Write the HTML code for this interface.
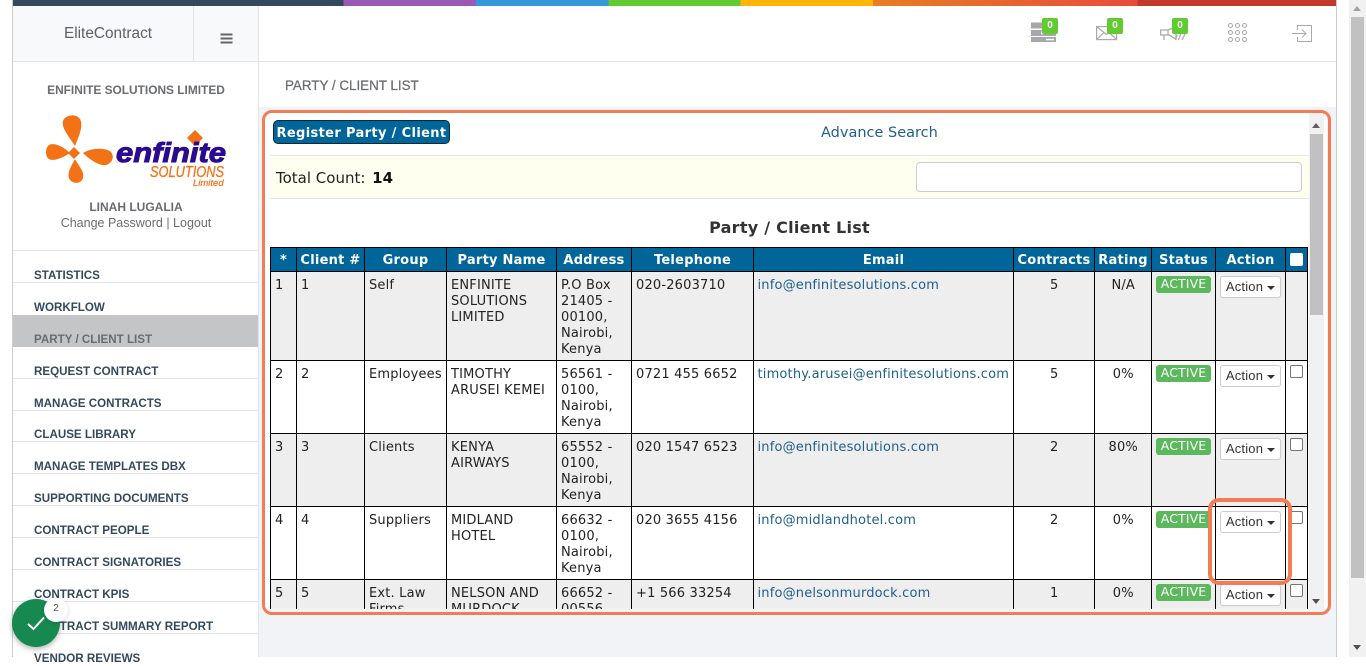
<!DOCTYPE html>
<html><head><meta charset="utf-8"><title>EliteContract</title>
<style>
html,body{margin:0;padding:0;width:1366px;height:657px;overflow:hidden;background:#fff}
*{box-sizing:border-box}
.a{position:absolute}
body{font-family:"Liberation Sans",sans-serif;color:#6a6c6f}
#bar{left:13px;top:0;width:1323px;height:6px;background:linear-gradient(to right,#34495e,#34495e 25%,#9b59b6 25%,#9b59b6 35%,#3498db 35%,#3498db 45%,#62cb31 45%,#62cb31 55%,#ffb606 55%,#ffb606 65%,#e67e22 65%,#e74c3c 85%,#c0392b 85%,#c0392b 100%)}
.m{position:absolute;left:34px;margin-top:1px;font:bold 11.6px/14px "Liberation Sans",sans-serif;color:#34495e;white-space:nowrap}
.s{position:absolute;left:13px;width:245px;height:1px;background:#e4e5e7}
.bd{position:absolute;width:16px;height:16px;background:#62cb31;border-radius:2px;color:#fff;font:bold 10px/16px "Liberation Sans",sans-serif;text-align:center}
table{border-collapse:collapse;table-layout:fixed;width:1037px;font:13px/16px "DejaVu Sans",sans-serif;color:#222;letter-spacing:.18px}
th{background:#006699;color:#fff;font-weight:bold;border:1px solid #000;height:24px;padding:2px 0 0;text-align:center;font-size:13px;white-space:nowrap;letter-spacing:.25px}
td{border:1px solid #000;padding:6px 3.5px 2px 4px;vertical-align:top}
tr.o td{background:#eee}
td.c{text-align:center}
td a{color:#1f5f8b;white-space:nowrap;margin-left:-.5px}
.ac{display:block;width:55px;height:17px;margin:-2px 0 0 0;background:#5cb85c;color:#fff;font:12.5px/16px "DejaVu Sans",sans-serif;border-radius:3px;text-align:center;letter-spacing:.1px}
.bt{display:block;width:61px;height:22px;margin:-2px 0 0 0;background:#fff;border:1px solid #ccc;border-radius:3px;font:13px/20px "Liberation Sans",sans-serif;color:#333;text-align:center;letter-spacing:.2px}
.bt i{display:inline-block;width:0;height:0;border:4px solid transparent;border-top-color:#333;border-bottom:0;margin-left:4px;vertical-align:1px}
.cb{display:block;width:13px;height:13px;border:1px solid #767676;border-radius:2px;background:#fff;margin:-2px 0 0 0}
</style></head><body>
<div class="a" style="left:0;top:0;width:13px;height:657px;background:#fff;border-right:1px solid #ccc"></div>
<div class="a" id="bar"></div>

<!-- header -->
<div class="a" style="left:13px;top:6px;width:181px;height:56px;background:#f7f9fa;border-right:1px solid #e4e5e7;border-bottom:1px solid #e4e5e7"></div>
<div class="a" style="left:13px;top:6px;width:190px;height:56px;font:15.4px/56px 'Liberation Sans',sans-serif;color:#5d6268;text-align:center">EliteContract</div>
<div class="a" style="left:194px;top:6px;width:65px;height:56px;background:#f7f9fa;border-right:1px solid #e4e5e7;border-bottom:1px solid #e4e5e7"></div>
<svg class="a" style="left:220px;top:33px" width="14" height="12"><path d="M.5 1.5H12.5M.5 5.500H12.500M.5 9.500H12.500" stroke="#666" stroke-width="2"/></svg>
<div class="a" style="left:259px;top:61px;width:1077px;height:1px;background:#e4e5e7"></div>

<!-- top icons -->
<svg class="a" style="left:1028px;top:20px" width="30" height="24"><g fill="#a5a7aa"><rect x="3" y="2.500" width="25" height="6"/><rect x="3" y="10" width="25" height="6"/><rect x="3" y="17" width="25" height="5"/></g><rect x="13" y="11.500" width="2" height="3" fill="#fff"/><rect x="18" y="18.800" width="8" height="1.500" fill="#fff"/></svg>
<div class="bd" style="left:1042px;top:18px">0</div>
<svg class="a" style="left:1096px;top:24px" width="24" height="18" fill="none" stroke="#aaa" stroke-width="1.200"><rect x=".6" y="2.600" width="20" height="13"/><path d="M.6 2.600L10.500 10.500 20.600 2.600M.6 15.600L8 8.500M20.600 15.600L13 8.500"/></svg>
<div class="bd" style="left:1107px;top:18px">0</div>
<svg class="a" style="left:1160px;top:24px" width="28" height="18" fill="none" stroke="#aaa" stroke-width="1.300"><path d="M.7 6H8V11H.7ZM4 11V16M8 6L16 3V15L8 10.500M17 11L15.500 16M21 9L18.500 16M25 10L22 16"/></svg>
<div class="bd" style="left:1172px;top:18px">0</div>
<svg class="a" style="left:1227px;top:22px" width="22" height="22" fill="none" stroke="#aaa" stroke-width="1.100"><g><circle cx="3.500" cy="3.500" r="2"/><circle cx="10.500" cy="3.500" r="2"/><circle cx="17.500" cy="3.500" r="2"/><circle cx="3.500" cy="10.500" r="2"/><circle cx="10.500" cy="10.500" r="2"/><circle cx="17.500" cy="10.500" r="2"/><circle cx="3.500" cy="17.500" r="2"/><circle cx="10.500" cy="17.500" r="2"/><circle cx="17.500" cy="17.500" r="2"/></g></svg>
<svg class="a" style="left:1291px;top:24px" width="22" height="19" fill="none" stroke="#aaa" stroke-width="1"><path d="M6.500 6V1.500H20.500V17.500H6.500V13M1 9.500H15M11 5.500L15 9.500 11 13.500"/></svg>

<!-- sidebar -->
<div class="a" style="left:13px;top:62px;width:246px;height:595px;background:#fff;border-right:1px solid #e4e5e7"></div>
<div class="a" style="left:13px;top:83px;width:246px;text-align:center;font:bold 11.9px/15px 'Liberation Sans',sans-serif;color:#6a6c6f">ENFINITE SOLUTIONS LIMITED</div>
<svg class="a" style="left:40px;top:110px" width="195" height="80" viewBox="0 0 195 80">
<g fill="#f47216">
<path d="M35 36C30 28 21 18 23 11C25 5 36 3 40 9C44 16 38 28 35 36Z"/>
<path d="M30 43C24 37 14 32 9 35C5 38 5 47 9 49C14 52 24 47 30 43Z"/>
<path d="M43 43C50 38 66 37 71 42C75 47 72 53 66 55C58 56 48 48 43 43Z"/>
<path d="M35 49C32 55 27 62 29 68C31 74 41 75 43 68C45 62 38 55 35 49Z"/>
<path d="M34 37L40 43 34 49 28 43Z"/>
<path d="M155 20L163 28 155 36 147 28Z"/>
</g>
<text x="76" y="52" font-family="Liberation Sans" font-weight="bold" font-style="italic" font-size="28" fill="#2b0a90" textLength="110" lengthAdjust="spacingAndGlyphs" stroke="#2b0a90" stroke-width="1">enfinite</text>
<text x="110" y="67" font-family="Liberation Sans" font-style="italic" font-size="15.500" fill="#f47216" textLength="74" lengthAdjust="spacingAndGlyphs" stroke="#f47216" stroke-width=".3">SOLUTIONS</text>
<text x="153" y="76" font-family="Liberation Sans" font-style="italic" font-size="9.500" fill="#f47216" stroke="#f47216" stroke-width=".2">Limited</text>
</svg>
<div class="a" style="left:13px;top:200px;width:246px;text-align:center;font:bold 12px/15px 'Liberation Sans',sans-serif;color:#6a6c6f">LINAH LUGALIA</div>
<div class="a" style="left:13px;top:216px;width:246px;text-align:center;font:12.500px/15px 'Liberation Sans',sans-serif;color:#6a6c6f">Change Password | Logout</div>

<div class="s" style="top:250px"></div><div class="s" style="top:282px"></div><div class="s" style="top:346px"></div><div class="s" style="top:378px"></div><div class="s" style="top:410px"></div><div class="s" style="top:441px"></div><div class="s" style="top:473px"></div><div class="s" style="top:505px"></div><div class="s" style="top:537px"></div><div class="s" style="top:569px"></div><div class="s" style="top:601px"></div><div class="s" style="top:633px"></div>
<div class="a" style="left:13px;top:315px;width:245px;height:32px;background:#c4c5c6"></div>
<div class="m" style="top:268px">STATISTICS</div>
<div class="m" style="top:300px">WORKFLOW</div>
<div class="m" style="top:332px;color:#6a6c6f">PARTY / CLIENT LIST</div>
<div class="m" style="top:364px">REQUEST CONTRACT</div>
<div class="m" style="top:396px">MANAGE CONTRACTS</div>
<div class="m" style="top:427px">CLAUSE LIBRARY</div>
<div class="m" style="top:459px">MANAGE TEMPLATES DBX</div>
<div class="m" style="top:491px">SUPPORTING DOCUMENTS</div>
<div class="m" style="top:523px">CONTRACT PEOPLE</div>
<div class="m" style="top:555px">CONTRACT SIGNATORIES</div>
<div class="m" style="top:587px">CONTRACT KPIS</div>
<div class="m" style="top:619px">CONTRACT SUMMARY REPORT</div>
<div class="m" style="top:651px">VENDOR REVIEWS</div>

<!-- content -->
<div class="a" style="left:259px;top:62px;width:1077px;height:595px;background:#f1f3f6"></div>
<div class="a" style="left:259px;top:62px;width:1077px;height:45px;background:#fff"></div>
<div class="a" style="left:285px;top:77px;font:13.400px/16px 'Liberation Sans',sans-serif;color:#6a6c6f;white-space:nowrap;-webkit-text-stroke:.25px #6a6c6f;margin-top:1px">PARTY / CLIENT LIST</div>
<div class="a" style="left:1336px;top:0;width:1px;height:657px;background:#c9cacb"></div>

<!-- panel -->
<div class="a" id="pn" style="left:265px;top:113px;width:1062px;height:496px;background:#fff;overflow:hidden">
 <div class="a" style="left:5px;top:0;width:1039px;height:43px;border-bottom:1px solid #e4e5e7"></div>
 <div class="a" style="left:8px;top:7px;width:177px;height:24px;background:#006699;border:1px solid #0a2a3a;border-radius:5px;color:#fff;font:bold 13px/25px 'DejaVu Sans',sans-serif;letter-spacing:.35px;text-align:center;white-space:nowrap">Register Party / Client</div>
 <div class="a" style="left:556px;top:10px;font:14.500px/19px 'DejaVu Sans',sans-serif;color:#1f5f8b;white-space:nowrap;margin-top:1px">Advance Search</div>
 <div class="a" style="left:5px;top:43px;width:1039px;height:43px;background:#ffffef;border-bottom:1px solid #e4e5e7"></div>
 <div class="a" style="left:11px;top:56px;font:15px/19px 'DejaVu Sans',sans-serif;color:#222;white-space:nowrap">Total Count: <b style="color:#111;margin-left:2px">14</b></div>
 <div class="a" style="left:651px;top:49px;width:386px;height:30px;background:#fff;border:1px solid #ccc;border-radius:4px"></div>
 <div class="a" style="left:5px;top:105px;width:1039px;text-align:center;font:bold 16px/20px 'DejaVu Sans',sans-serif;letter-spacing:.25px;color:#333">Party / Client List</div>
 <div class="a" style="left:5px;top:134px">
 <table>
 <colgroup><col style="width:26px"><col style="width:68px"><col style="width:82px"><col style="width:110px"><col style="width:75px"><col style="width:122px"><col style="width:260px"><col style="width:81px"><col style="width:57px"><col style="width:64px"><col style="width:70px"><col style="width:22px"></colgroup>
 <tr><th>*</th><th>Client #</th><th>Group</th><th>Party Name</th><th>Address</th><th>Telephone</th><th>Email</th><th>Contracts</th><th>Rating</th><th>Status</th><th>Action</th><th><span class="cb" style="border:0;margin:-2px auto 0;border-radius:2px"></span></th></tr>
 <tr class="o"><td>1</td><td>1</td><td>Self</td><td>ENFINITE SOLUTIONS LIMITED</td><td>P.O Box 21405 - 00100, Nairobi, Kenya</td><td>020-2603710</td><td><a>info@enfinitesolutions.com</a></td><td class="c">5</td><td class="c">N/A</td><td><span class="ac">ACTIVE</span></td><td><span class="bt">Action<i></i></span></td><td></td></tr>
 <tr><td>2</td><td>2</td><td>Employees</td><td>TIMOTHY ARUSEI KEMEI</td><td>56561 - 0100, Nairobi, Kenya</td><td>0721 455 6652</td><td><a>timothy.arusei@enfinitesolutions.com</a></td><td class="c">5</td><td class="c">0%</td><td><span class="ac">ACTIVE</span></td><td><span class="bt">Action<i></i></span></td><td><span class="cb"></span></td></tr>
 <tr class="o"><td>3</td><td>3</td><td>Clients</td><td>KENYA AIRWAYS</td><td>65552 - 0100, Nairobi, Kenya</td><td>020 1547 6523</td><td><a>info@enfinitesolutions.com</a></td><td class="c">2</td><td class="c">80%</td><td><span class="ac">ACTIVE</span></td><td><span class="bt">Action<i></i></span></td><td><span class="cb"></span></td></tr>
 <tr><td>4</td><td>4</td><td>Suppliers</td><td>MIDLAND HOTEL</td><td>66632 - 0100, Nairobi, Kenya</td><td>020 3655 4156</td><td><a>info@midlandhotel.com</a></td><td class="c">2</td><td class="c">0%</td><td><span class="ac">ACTIVE</span></td><td><span class="bt">Action<i></i></span></td><td><span class="cb"></span></td></tr>
 <tr class="o"><td>5</td><td>5</td><td>Ext. Law Firms</td><td>NELSON AND MURDOCK</td><td>66652 - 00556, Nairobi, Kenya</td><td>+1 566 33254</td><td><a>info@nelsonmurdock.com</a></td><td class="c">1</td><td class="c">0%</td><td><span class="ac">ACTIVE</span></td><td><span class="bt">Action<i></i></span></td><td><span class="cb"></span></td></tr>
 </table>
 </div>
 <!-- inner scrollbar -->
 <div class="a" style="left:1044px;top:0;width:15px;height:496px;background:#f1f1f1"></div>
 <div class="a" style="left:1045px;top:21px;width:13px;height:181px;background:#c1c1c1"></div>
 <div class="a" style="left:1047px;top:10px;width:0;height:0;border:4px solid transparent;border-bottom:5px solid #606060;border-top:0"></div>
 <div class="a" style="left:1047px;top:486px;width:0;height:0;border:4px solid transparent;border-top:5px solid #505050;border-bottom:0"></div>
</div>

<!-- orange annotations -->
<div class="a" style="left:262px;top:110px;width:1069px;height:505px;border:3px solid #f47c55;border-radius:10px"></div>
<div class="a" style="left:1208px;top:498px;width:84px;height:87px;border:4px solid #f47c55;border-radius:11px"></div>

<!-- page scrollbar -->
<div class="a" style="left:1349px;top:0;width:17px;height:657px;background:#f1f1f1"></div>
<div class="a" style="left:1351px;top:17px;width:13px;height:561px;background:#c1c1c1"></div>
<div class="a" style="left:1353px;top:6px;width:0;height:0;border:4px solid transparent;border-bottom:5px solid #a3a3a3;border-top:0"></div>
<div class="a" style="left:1353px;top:645px;width:0;height:0;border:4px solid transparent;border-top:5px solid #505050;border-bottom:0"></div>

<!-- floating badge -->
<div class="a" style="left:12px;top:599px;width:48px;height:48px;border-radius:50%;background:#15894f;box-shadow:0 2px 6px rgba(0,0,0,.3)"></div>
<svg class="a" style="left:26px;top:615px" width="20" height="17" fill="none" stroke="#fff" stroke-width="2"><path d="M2 9L7.500 14 18 2.500"/></svg>
<div class="a" style="left:44px;top:598px;width:24px;height:24px;border-radius:50%;background:#fff;box-shadow:0 1px 4px rgba(0,0,0,.15);font:10px/22px 'Liberation Sans',sans-serif;color:#555;text-align:center">2</div>
</body></html>
